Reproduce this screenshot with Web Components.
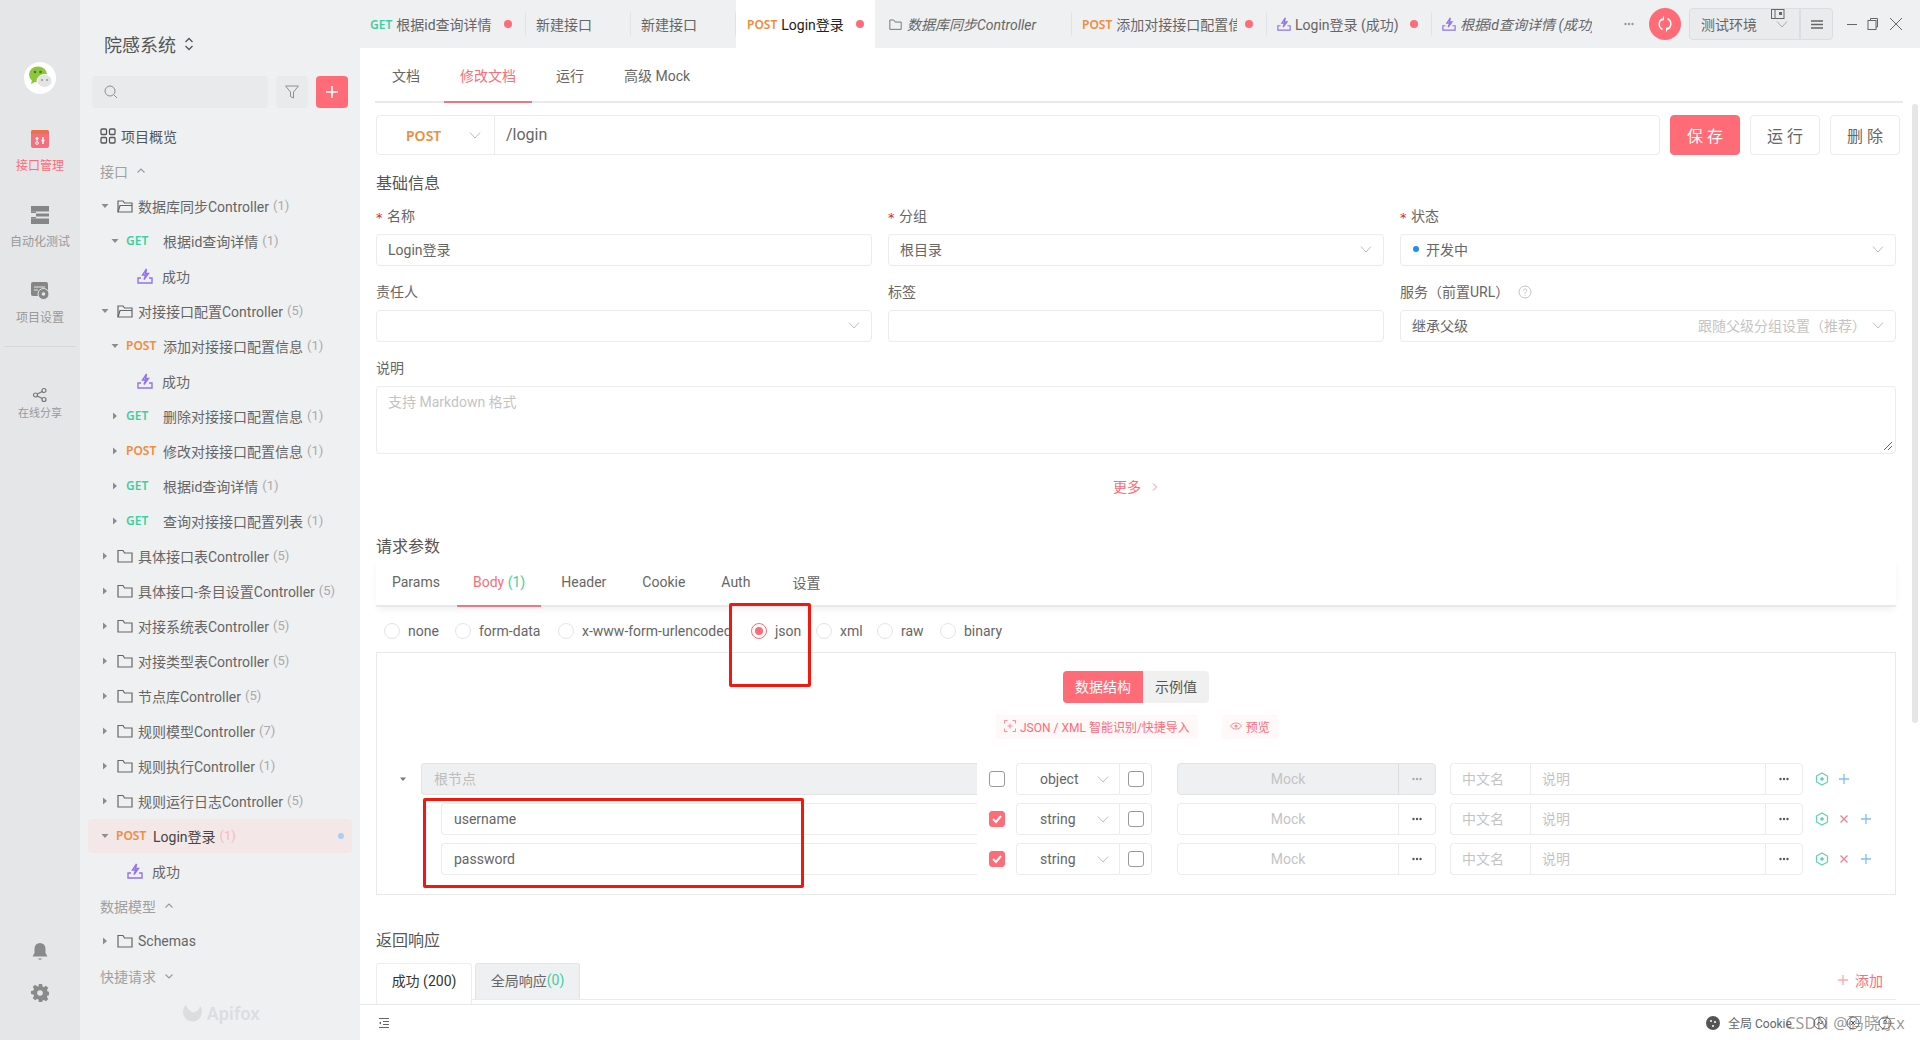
<!DOCTYPE html>
<html lang="zh">
<head>
<meta charset="utf-8">
<title>Apifox</title>
<style>
  html, body { margin: 0; height: 1040px; overflow: hidden; background: #fff; }
  body { font-family: Roboto, "Noto Sans CJK SC", sans-serif; font-size: 14px; color: #666; }
</style>
</head>
<body>
<app-shell>
  <side-rail slot="rail"></side-rail>
  <side-tree slot="tree">
    <tree-row kind="open" arrow="down" pad="12" count="1">数据库同步Controller</tree-row>
    <tree-row kind="get" arrow="down" pad="22" count="1">根据id查询详情</tree-row>
    <tree-row kind="case" pad="49">成功</tree-row>
    <tree-row kind="open" arrow="down" pad="12" count="5">对接接口配置Controller</tree-row>
    <tree-row kind="post" arrow="down" pad="22" count="1">添加对接接口配置信息</tree-row>
    <tree-row kind="case" pad="49">成功</tree-row>
    <tree-row kind="get" arrow="right" pad="22" count="1">删除对接接口配置信息</tree-row>
    <tree-row kind="post" arrow="right" pad="22" count="1">修改对接接口配置信息</tree-row>
    <tree-row kind="get" arrow="right" pad="22" count="1">根据id查询详情</tree-row>
    <tree-row kind="get" arrow="right" pad="22" count="1">查询对接接口配置列表</tree-row>
    <tree-row kind="folder" arrow="right" pad="12" count="5">具体接口表Controller</tree-row>
    <tree-row kind="folder" arrow="right" pad="12" count="5">具体接口-条目设置Controller</tree-row>
    <tree-row kind="folder" arrow="right" pad="12" count="5">对接系统表Controller</tree-row>
    <tree-row kind="folder" arrow="right" pad="12" count="5">对接类型表Controller</tree-row>
    <tree-row kind="folder" arrow="right" pad="12" count="5">节点库Controller</tree-row>
    <tree-row kind="folder" arrow="right" pad="12" count="7">规则模型Controller</tree-row>
    <tree-row kind="folder" arrow="right" pad="12" count="1">规则执行Controller</tree-row>
    <tree-row kind="folder" arrow="right" pad="12" count="5">规则运行日志Controller</tree-row>
    <tree-row kind="post" arrow="down" pad="12" count="1" active>Login登录</tree-row>
    <tree-row kind="case" pad="39">成功</tree-row>
    <tree-head dir="up">数据模型</tree-head>
    <tree-row kind="folder" arrow="right" pad="12">Schemas</tree-row>
    <tree-head dir="down">快捷请求</tree-head>
  </side-tree>
  <main-panel slot="main">
    <tab-strip slot="tabs">
      <tab-item w="166" method="GET" dot>根据id查询详情</tab-item>
      <tab-item w="105">新建接口</tab-item>
      <tab-item w="105">新建接口</tab-item>
      <tab-item w="139" method="POST" dot active>Login登录</tab-item>
      <tab-item w="197" icon="folder" italic>数据库同步Controller</tab-item>
      <tab-item w="195" method="POST" dot>添加对接接口配置信息</tab-item>
      <tab-item w="165" icon="case" dot>Login登录 (成功)</tab-item>
      <tab-item w="168" icon="case" italic>根据id查询详情 (成功)</tab-item>
    </tab-strip>
    <api-form slot="body"></api-form>
    <status-bar slot="foot"></status-bar>
  </main-panel>
</app-shell>

<script>
const PINK = "#ff6b77";
const chevron = (c = "#bdbdbd") => `<svg width="12" height="12" viewBox="0 0 12 12"><path d="M1 3.5 6 9l5-5.5" fill="none" stroke="${c}"/></svg>`;
const dots = (c = "#555") => `<svg width="10" height="4" viewBox="0 0 10 4" fill="${c}"><circle cx="1.500" cy="2" r="1.200"/><circle cx="5" cy="2" r="1.200"/><circle cx="8.500" cy="2" r="1.200"/></svg>`;
const caseIcon = (s = 16) => `<svg width="${s}" height="${s}" viewBox="0 0 16 16" fill="none" stroke="#9373ee" stroke-width="1.4"><path d="M4 10H1v5h14v-5h-3"/><path d="M9.5 1 5.5 7h3.2L7 11.5 11.5 5.5H8.6z" fill="#e6defb"/></svg>`;
const folderIcon = (open, s = 16) => open
  ? `<svg width="${s}" height="${s}" viewBox="0 0 16 16" fill="none" stroke="#666" stroke-width="1.2"><path d="M1 14V3h5l1.5 2H15v9z"/><path d="M1 14l2-6.500h12"/></svg>`
  : `<svg width="${s}" height="${s}" viewBox="0 0 16 16" fill="none" stroke="#666" stroke-width="1.2"><path d="M1 14V2.500h5L7.500 5H15v9z"/></svg>`;

// base: every element gets an open shadow root and fills it when connected
class UiEl extends HTMLElement {
  constructor() {
    super();
    this.attachShadow({ mode: "open" });
  }
  connectedCallback() {
    this.shadowRoot.innerHTML = `<style>${this.css()}</style>${this.html()}`;
  }
  css() { return ""; }
  html() { return "<slot></slot>"; }
}

class AppShell extends UiEl {
  css() { return `
    :host { display: flex; width: 1920px; height: 1040px; position: relative; overflow: hidden; }
    .rail { flex: 0 0 80px; display: flex; }
    .tree { flex: 0 0 280px; display: flex; }
    .main { flex: 1; min-width: 0; display: flex; }
    .mark { position: absolute; right: 15px; bottom: 5px; font-family: "Noto Sans", "Noto Sans CJK SC", sans-serif; font-size: 16px; line-height: 24px; color: rgba(90,90,90,.62); letter-spacing: .2px; }
  `; }
  html() { return `
    <div class="rail"><slot name="rail"></slot></div>
    <div class="tree"><slot name="tree"></slot></div>
    <div class="main"><slot name="main"></slot></div>
    <div class="mark">CSDN @码晓东x</div>`; }
}

class RailItem extends UiEl {
  css() { return `
    :host { display: flex; flex-direction: column; align-items: center; height: 68px; margin-bottom: 8px; padding-top: 4px; box-sizing: border-box; gap: 9px; font-size: 12px; line-height: 16px; color: #999; }
    :host([on]) { color: ${PINK}; }
    :host([small]) { height: auto; padding: 0; gap: 3px; font-size: 11px; margin-top: 40px; margin-bottom: 0; }
    .i { height: 20px; display: flex; }
    :host([small]) .i { height: 16px; }
  `; }
  html() { return `<div class="i"><slot name="icon"></slot></div><slot></slot>`; }
}

class SideRail extends UiEl {
  css() { return `
    :host { display: flex; flex-direction: column; width: 80px; height: 1040px; background: #e5e6e8; box-sizing: border-box; padding-top: 62px; align-items: stretch; }
    .logo { align-self: center; width: 32px; height: 32px; margin-bottom: 31px; }
    .line { height: 1px; background: #d6d7d9; margin: -7px 4px 0; }
    .end { margin-top: auto; padding-bottom: 38px; display: flex; flex-direction: column; align-items: center; gap: 23px; }
    svg { display: block; }
  `; }
  html() { return `
    <svg class="logo" viewBox="0 0 32 32">
      <circle cx="16" cy="16" r="16" fill="#fff"/>
      <ellipse cx="14" cy="12.500" rx="9" ry="8" fill="#8cc63f"/>
      <path d="M8 18l-1 4 5-2.500z" fill="#8cc63f"/>
      <circle cx="11" cy="10" r="1.300" fill="#4a7a1a"/><circle cx="16.500" cy="10" r="1.300" fill="#4a7a1a"/>
      <ellipse cx="20.500" cy="19" rx="7.500" ry="6.500" fill="#e4e4e4" stroke="#fff"/>
      <circle cx="18" cy="18" r="1" fill="#999"/><circle cx="23" cy="18" r="1" fill="#999"/>
    </svg>
    <rail-item on>
      <svg slot="icon" width="18" height="18" viewBox="0 0 18 18" style="margin-top:1px">
        <rect y="0" width="18" height="18" rx="2" fill="#f5707c"/>
        <path d="M0 2a2 2 0 0 1 2-2h14a2 2 0 0 1 2 2v2H0z" fill="#e8724e"/>
        <path d="M6 7v3.500M12 7v7M4.500 8.500h3M10.500 10.500h3" stroke="#fff" stroke-width="1.500"/>
        <circle cx="6" cy="13" r="1.400" fill="none" stroke="#fff"/>
      </svg>接口管理</rail-item>
    <rail-item>
      <svg slot="icon" width="18" height="18" viewBox="0 0 18 18" style="margin-top:1px" fill="#868686">
        <rect width="18" height="5.500"/><rect y="12.500" width="18" height="5.500"/>
        <rect x="0" y="5.500" width="5" height="1.500"/><rect x="0" y="11" width="5" height="1.500"/>
        <rect x="5" y="7.500" width="13" height="3"/>
      </svg>自动化测试</rail-item>
    <rail-item>
      <svg slot="icon" width="18" height="18" viewBox="0 0 18 18" style="margin-top:1px">
        <rect width="17" height="14" rx="2" fill="#868686"/>
        <path d="M3 5h11M3 8h4" stroke="#e5e6e8" stroke-width="1.200"/>
        <circle cx="12.500" cy="12" r="5.500" fill="#868686" stroke="#e5e6e8"/>
        <circle cx="12.500" cy="12" r="1.800" fill="#e5e6e8"/>
      </svg>项目设置</rail-item>
    <div class="line"></div>
    <rail-item small>
      <svg slot="icon" width="16" height="16" viewBox="0 0 16 16" fill="none" stroke="#777" stroke-width="1.200">
        <circle cx="12" cy="3.500" r="2"/><circle cx="12" cy="12.500" r="2"/><circle cx="3.500" cy="8" r="2"/>
        <path d="M5.300 7 10.200 4.500M5.300 9l4.900 2.500"/>
      </svg>在线分享</rail-item>
    <div class="end">
      <svg width="16" height="18" viewBox="0 0 16 18" fill="#8a8a8a"><path d="M8 0a5.500 5.500 0 0 1 5.500 5.500V10l2 3.500H.5l2-3.500V5.500A5.500 5.500 0 0 1 8 0z"/><path d="M5.500 15.500h5L8 17z"/></svg>
      <svg width="18" height="18" viewBox="0 0 18 18"><path fill="#8a8a8a" d="M7.400 0h3.200l.4 2.400 1.500.7 2-1.400 2.300 2.300-1.400 2 .7 1.500 2.400.4v3.200l-2.400.4-.7 1.500 1.400 2-2.300 2.300-2-1.400-1.500.7-.4 2.400H7.400L7 15.600l-1.500-.7-2 1.400-2.300-2.300 1.400-2-.7-1.500L-.5 10V7l2.400-.4.700-1.500-1.400-2 2.300-2.300 2 1.400L7 2.400z" transform="translate(.5 0)"/><circle cx="9" cy="9" r="2.800" fill="#e5e6e8"/></svg>
    </div>`; }
}

class TreeHead extends UiEl {
  css() { return `
    :host { display: flex; align-items: center; height: 35px; padding-left: 12px; gap: 8px; color: #a0a0a0; font-size: 14px; }
    svg { display: block; }
  `; }
  html() {
    const p = this.getAttribute("dir") === "down" ? "M1.500 3.500 5 7l3.500-3.500" : "M1.500 6.500 5 3l3.500 3.500";
    return `<slot></slot><svg width="10" height="10" viewBox="0 0 10 10"><path d="${p}" fill="none" stroke="#999" stroke-width="1.100"/></svg>`;
  }
}

class TreeRow extends UiEl {
  css() {
    const kind = this.getAttribute("kind");
    return `
    :host { display: flex; align-items: center; height: 35px; box-sizing: border-box; padding-left: ${this.getAttribute("pad")}px; font-size: 14px; color: #666; white-space: nowrap; }
    :host([active]) { height: 34px; margin-top: 1px; padding-bottom: 1px; background: #f3e7e8; border-radius: 4px; color: #444; }
    .a { width: 10px; margin: 1px ${kind === "get" || kind === "post" ? 6 : 7}px 0 0; display: flex; justify-content: center; }
    .ic { display: flex; margin: 1px ${kind === "case" ? 9 : 5}px 0 0; }
    .m { font-family: "Noto Sans", sans-serif; font-size: 12px; font-weight: 600; width: 37px; }
    .m.get { color: #3fcf9f; } .m.post { color: #f28b3e; }
    .n { margin-left: 4px; color: #aaa; font-size: 13px; }
    :host([active]) .n { color: #f7b7bc; }
    .dot { margin-left: auto; margin-right: 8px; width: 6px; height: 6px; border-radius: 50%; background: #aecdf3; }
    svg { display: block; }
  `; }
  html() {
    const kind = this.getAttribute("kind"), arrow = this.getAttribute("arrow"), count = this.getAttribute("count");
    const tri = arrow === "down"
      ? `<svg width="10" height="10" viewBox="0 0 10 10"><path d="M1.500 3h7L5 7z" fill="#8c8c8c"/></svg>`
      : `<svg width="10" height="10" viewBox="0 0 10 10"><path d="M3 1.500v7L7 5z" fill="#8c8c8c"/></svg>`;
    let lead = "";
    if (kind === "open") lead = `<span class="ic">${folderIcon(true)}</span>`;
    if (kind === "folder") lead = `<span class="ic">${folderIcon(false)}</span>`;
    if (kind === "case") lead = `<span class="ic">${caseIcon()}</span>`;
    if (kind === "get") lead = `<span class="m get">GET</span>`;
    if (kind === "post") lead = `<span class="m post">POST</span>`;
    return `${arrow ? `<span class="a">${tri}</span>` : ""}${lead}<slot></slot>${count ? `<span class="n">(${count})</span>` : ""}${this.hasAttribute("active") ? `<span class="dot"></span>` : ""}`;
  }
}

class SideTree extends UiEl {
  css() { return `
    :host { display: flex; flex-direction: column; width: 280px; height: 1040px; background: #eff0f2; box-sizing: border-box; position: relative; }
    .title { height: 88px; display: flex; align-items: center; padding: 0 0 0 24px; box-sizing: border-box; margin-bottom: -12px; font-size: 18px; color: #555; gap: 8px; }
    .tools { display: flex; gap: 8px; padding: 0 12px; height: 32px; }
    .search { width: 176px; background: #e9eaec; border-radius: 4px; display: flex; align-items: center; padding-left: 12px; box-sizing: border-box; }
    .btn { width: 32px; background: #e9eaec; border-radius: 4px; display: flex; align-items: center; justify-content: center; }
    .btn.add { background: ${PINK}; }
    .list { padding: 10px 8px 0; display: flex; flex-direction: column; }
    .over { display: flex; align-items: center; height: 35px; padding-left: 12px; gap: 5px; color: #555; }
    .logo { position: absolute; left: 103px; top: 1003px; display: flex; align-items: center; gap: 4px; color: #dcdddf; font-family: "Noto Sans", sans-serif; font-size: 17px; font-weight: 600; line-height: 22px; }
    svg { display: block; }
  `; }
  html() { return `
    <div class="title">院感系统
      <svg width="10" height="16" viewBox="0 0 10 16" fill="none" stroke="#555" stroke-width="1.300"><path d="M1.500 6 5 2.500 8.500 6M1.500 10 5 13.500 8.500 10"/></svg></div>
    <div class="tools">
      <div class="search"><svg width="14" height="14" viewBox="0 0 14 14" fill="none" stroke="#8f8f8f"><circle cx="6" cy="6" r="5"/><path d="M10 10l3 3"/></svg></div>
      <div class="btn"><svg width="14" height="14" viewBox="0 0 14 14" fill="none" stroke="#8f8f8f"><path d="M.5 1h13L8.500 7v6l-3-1.500V7z"/></svg></div>
      <div class="btn add"><svg width="14" height="14" viewBox="0 0 14 14" stroke="#fff" stroke-width="1.600"><path d="M7 1v12M1 7h12"/></svg></div>
    </div>
    <div class="list">
      <div class="over"><svg width="16" height="16" viewBox="0 0 16 16" fill="none" stroke="#555" stroke-width="1.300"><rect x="1" y="1" width="5.500" height="5.500" rx="1"/><rect x="9.500" y="1" width="5.500" height="5.500" rx="1"/><rect x="1" y="9.500" width="5.500" height="5.500" rx="1"/><rect x="9.500" y="9.500" width="5.500" height="5.500" rx="1"/></svg>项目概览</div>
      <tree-head dir="up">接口</tree-head>
      <slot></slot>
    </div>
    <div class="logo"><svg width="20" height="18" viewBox="0 0 20 18" fill="#dcdddf"><path d="M3 0c-2 2-3 4-3 7a9.500 9.500 0 0 0 19 0c0-2.500-.5-4.500-2-6.500-.5 4-3 6-7 7C7 6 4.500 4 3 0z"/></svg>Apifox</div>`; }
}

class TabItem extends UiEl {
  css() {
    const w = this.getAttribute("w");
    return `
    :host { position: relative; flex: 0 0 ${w}px; width: ${w}px; height: 48px; box-sizing: border-box; display: flex; align-items: center; padding: 0 14px 0 10px; font-size: 14px; color: #666; white-space: nowrap; overflow: hidden; gap: 4px; }
    :host([active]) { background: #fff; color: #222; padding: 0 11px; }
    :host([italic]) { padding-right: 8px; }
    :host([icon="folder"]) { padding-left: 14px; gap: 5px; }
    :host([italic]) .t { font-style: italic; }
    :host::after { content: ""; position: absolute; right: 0; top: 12px; height: 24px; width: 1px; background: #e2e3e5; }
    :host([active])::after, :host(:last-child)::after { display: none; }
    .t { overflow: hidden; flex: 1; min-width: 0; }
    .m { font-family: "Noto Sans", sans-serif; font-weight: 600; font-size: 12px; }
    .GET { color: #3fcf9f; } .POST { color: #f28b3e; }
    .dot { width: 8px; height: 8px; border-radius: 50%; background: ${PINK}; flex: none; margin-left: 4px; }
    svg { display: block; flex: none; }
  `; }
  html() {
    const m = this.getAttribute("method"), ic = this.getAttribute("icon");
    return `${m ? `<span class="m ${m}">${m}</span>` : ""}${ic === "folder" ? folderIcon(false, 13).replace('#666', '#777') : ""}${ic === "case" ? caseIcon(14) : ""}<span class="t"><slot></slot></span>${this.hasAttribute("dot") ? `<span class="dot"></span>` : ""}`;
  }
}

class TabStrip extends UiEl {
  css() { return `
    :host { display: flex; height: 48px; background: #eff0f2; align-items: stretch; }
    .tabs { display: flex; flex: 0 0 1240px; overflow: hidden; }
    .more { width: 49px; box-sizing: border-box; padding-left: 9px; display: flex; align-items: center; justify-content: center; }
    .sync { width: 32px; height: 32px; border-radius: 50%; background: ${PINK}; margin: 8px 8px 8px 0; display: flex; align-items: center; justify-content: center; }
    .env { position: relative; width: 144px; height: 32px; margin-top: 8px; box-sizing: border-box; border: 1px solid #dcdde0; border-radius: 4px; background: #eaebed; display: flex; align-items: center; font-size: 14px; color: #666; }
    .env .n { width: 111px; padding-left: 11px; box-sizing: border-box; display: flex; align-items: center; justify-content: space-between; padding-right: 11px; height: 100%; border-right: 2px solid #dcdde0; }
    .env .b { flex: 1; display: flex; justify-content: center; }
    .pop { position: absolute; left: 81px; top: -1px; }
    .win { display: flex; align-items: center; gap: 9px; margin-left: 13px; }
    svg { display: block; }
  `; }
  html() { return `
    <div class="tabs"><slot></slot></div>
    <div class="more">${dots("#999")}</div>
    <div class="sync"><svg width="16" height="16" viewBox="0 0 16 16" fill="none" stroke="#fff" stroke-width="1.500"><path d="M5.500 13.500A6 6 0 0 1 6 2.600M10.500 2.500a6 6 0 0 1-.5 10.900"/><path d="M6.500 .5v3.500H3M9.500 15.500V12H13" stroke-width="1"/></svg></div>
    <div class="env">
      <div class="n">测试环境${chevron("#aaa")}</div>
      <div class="b"><svg width="14" height="12" viewBox="0 0 14 12" fill="none" stroke="#666" stroke-width="1.500"><path d="M1 3h12M1 6.500h12M1 10h12"/></svg></div>
      <svg class="pop" width="14" height="12" viewBox="0 0 14 12" fill="#eaebed" stroke="#666"><rect x=".5" y="1.500" width="12.500" height="9"/><path d="M4 1.500v9"/><rect x="8" y="4" width="3" height="3" fill="#666" stroke="none"/></svg>
    </div>
    <div class="win">
      <svg width="12" height="12" viewBox="0 0 12 12" stroke="#666"><path d="M1 6.500h10"/></svg>
      <svg width="12" height="14" viewBox="0 0 12 14" fill="none" stroke="#666"><rect x="1" y="3.500" width="8" height="9"/><path d="M3.500 3.500V1.500h7v8.500H9"/></svg>
      <svg width="16" height="16" viewBox="0 0 16 16" stroke="#666"><path d="M2 2l12 12M14 2 2 14"/></svg>
    </div>`; }
}

class MainPanel extends UiEl {
  css() { return `
    :host { display: flex; flex-direction: column; width: 1560px; height: 1040px; background: #fff; }
    .body { flex: 1; min-height: 0; display: flex; overflow: hidden; }
    .bar { flex: 0 0 8px; display: flex; flex-direction: column; padding-top: 56px; box-sizing: border-box; }
    .bar i { display: block; width: 6px; height: 619px; background: #e6e6e6; border-radius: 3px; }
  `; }
  html() { return `
    <slot name="tabs"></slot>
    <div class="body"><slot name="body"></slot><div class="bar"><i></i></div></div>
    <slot name="foot"></slot>`; }
}

class UnderTabs extends UiEl {
  css() { return `
    :host { display: flex; border-bottom: 2px solid #e8e9ea; height: 53px; box-sizing: content-box; gap: 8px; font-size: 14px; color: #666; }
    :host([shadow]) { height: 47px; gap: 4px; box-shadow: 0 4px 8px -2px rgba(0,0,0,.07); }
    ::slotted(u-tab) { margin-bottom: -2px; }
  `; }
}

class UTab extends UiEl {
  css() { return `
    :host { display: flex; align-items: center; padding: 0 16px; border-bottom: 2px solid transparent; white-space: nowrap; }
    :host([on]) { color: ${PINK}; border-bottom-color: #f5747f; }
    span { white-space: pre; }
  `; }
  html() { return `<span><slot></slot></span>`; }
}

class FormField extends UiEl {
  css() { return `
    :host { display: flex; flex-direction: column; gap: 8px; font-size: 14px; min-width: 0; }
    .l { height: 20px; line-height: 20px; color: #666; display: flex; align-items: center; }
    .r { color: #d4264a; font-family: "DejaVu Sans", sans-serif; font-size: 13px; width: 7px; margin-right: 4px; padding-top: 3px; }
    .b { height: 32px; box-sizing: border-box; border: 1px solid #ebebeb; border-radius: 4px; display: flex; align-items: center; padding: 0 11px 2px; color: #666; gap: 6px; }
    .g { flex: 1; }
    .h { color: #c4c4c4; }
    svg { display: block; flex: none; }
  `; }
  html() {
    const a = (n) => this.getAttribute(n);
    return `<div class="l">${this.hasAttribute("req") ? `<span class="r">*</span>` : ""}${a("label")}${this.hasAttribute("help") ? `<svg style="margin-left:9px" width="14" height="14" viewBox="0 0 14 14" fill="none" stroke="#c4c4c4"><circle cx="7" cy="7" r="6"/><path d="M5.300 5.500C5.500 3.500 8.800 3.500 8.800 5.500 8.800 7 7 7 7 8.600M7 9.800v1"/></svg>` : ""}</div>
      <div class="b"><slot></slot><span class="g"></span>${a("hint") ? `<span class="h">${a("hint")}</span>` : ""}${this.hasAttribute("sel") ? chevron() : ""}</div>`;
  }
}

class RadioItem extends UiEl {
  css() { return `
    :host { display: flex; align-items: center; gap: 8px; font-size: 14px; color: #666; white-space: nowrap; }
    i { width: 16px; height: 16px; box-sizing: border-box; border: 1px solid #e5e5e5; border-radius: 50%; display: flex; align-items: center; justify-content: center; flex: none; }
    :host([on]) i { border-color: ${PINK}; }
    :host([on]) i::after { content: ""; width: 8px; height: 8px; border-radius: 50%; background: ${PINK}; }
  `; }
  html() { return `<i></i><slot></slot>`; }
}

class CheckBox extends UiEl {
  css() { return `
    :host { display: block; width: 16px; height: 16px; box-sizing: border-box; border: 1px solid #999; border-radius: 3px; flex: none; }
    :host([on]) { background: ${PINK}; border-color: ${PINK}; }
    svg { display: block; }
  `; }
  html() { return this.hasAttribute("on") ? `<svg width="14" height="14" viewBox="0 0 14 14" fill="none" stroke="#fff" stroke-width="2"><path d="M3 7l3 3 5-6"/></svg>` : ""; }
}

class SchemaRow extends UiEl {
  css() { return `
    :host { display: flex; height: 32px; align-items: center; font-size: 14px; color: #666; padding-right: 0; }
    .lead { width: 44px; flex: none; display: flex; justify-content: center; padding-left: 8px; box-sizing: border-box; }
    .cell { height: 32px; box-sizing: border-box; border: 1px solid #ebebeb; display: flex; align-items: center; flex: none; }
    .name { flex: 1; min-width: 0; border-right: 0; border-radius: 4px 0 0 4px; padding-left: 12px; }
    :host([root]) .name { background: #eff0f2; border-color: #e2e3e5; color: #bdbdbd; padding-bottom: 2px; }
    :host(:not([root])) .name { margin-left: 20px; }
    .c1 { margin: 0 11px 0 12px; }
    .type { width: 103px; border-radius: 4px 0 0 4px; padding-left: 23px; padding-right: 10px; justify-content: space-between; border-right: 0; }
    .req { width: 33px; border-radius: 0 4px 4px 0; justify-content: center; margin-right: 25px; }
    .mock { width: 259px; border-radius: 4px; color: #c4c4c4; }
    :host([root]) .mock { background: #eff0f2; border-color: #e2e3e5; }
    .mock b { flex: 1; text-align: center; font-weight: 400; }
    .more { width: 36px; height: 100%; border-left: 1px solid #ebebeb; display: flex; align-items: center; justify-content: center; }
    :host([root]) .mock .more { border-color: #ddd; }
    .cn { width: 80px; margin-left: 14px; border-radius: 4px 0 0 4px; padding: 0 0 2px 11px; color: #c4c4c4; border-right: 0; }
    .ds { width: 235px; padding: 0 0 2px 11px; color: #c4c4c4; border-right: 0; }
    .dm { width: 38px; border-radius: 0 4px 4px 0; justify-content: center; }
    .act { width: 92px; flex: none; padding-left: 12px; box-sizing: border-box; display: flex; align-items: center; gap: 8px; }
    svg { display: block; }
  `; }
  html() {
    const root = this.hasAttribute("root");
    const eye = `<svg width="14" height="14" viewBox="0 0 14 14" fill="none" stroke="#5bd5ab" stroke-width="1.200"><path d="M7 1l5.500 3v6L7 13 1.500 10V4z"/><circle cx="7" cy="7" r="1.800" fill="#5bd5ab" stroke="none"/></svg>`;
    const del = `<svg width="14" height="14" viewBox="0 0 14 14" stroke="#f4808c" stroke-width="1.300"><path d="M3.500 3.500l7 7M10.500 3.500l-7 7"/></svg>`;
    const add = `<svg width="14" height="14" viewBox="0 0 14 14" stroke="#82bff5" stroke-width="1.300"><path d="M7 2v10M2 7h10"/></svg>`;
    return `
      <div class="lead">${root ? `<svg width="8" height="8" viewBox="0 0 8 8"><path d="M1 2.500h6L4 6z" fill="#777"/></svg>` : ""}</div>
      <div class="cell name"><slot></slot></div>
      <check-box class="c1" ${root ? "" : "on"}></check-box>
      <div class="cell type">${this.getAttribute("type")}${chevron()}</div>
      <div class="cell req"><check-box></check-box></div>
      <div class="cell mock"><b>Mock</b><span class="more">${dots(root ? "#aaa" : "#555")}</span></div>
      <div class="cell cn">中文名</div>
      <div class="cell ds">说明</div>
      <div class="cell dm">${dots()}</div>
      <div class="act">${eye}${root ? "" : del}${add}</div>`;
  }
}

class ApiForm extends UiEl {
  css() { return `
    :host { display: block; flex: 1; min-width: 0; padding: 0 16px; box-sizing: border-box; color: #666; position: relative; }
    under-tabs.nav { margin: 0 -7px 0 -1px; }
    under-tabs.nav u-tab:first-child { margin-left: 1px; }
    .url { display: flex; gap: 10px; margin: 12px -4px 0 0; height: 40px; }
    .addr { flex: 1; display: flex; border: 1px solid #ebebeb; border-radius: 4px; font-size: 16px; color: #666; box-sizing: border-box; }
    .addr .me { width: 118px; box-sizing: border-box; border-right: 1px solid #ebebeb; display: flex; align-items: center; justify-content: space-between; padding: 0 13px 0 29px; color: #f28b3e; font-family: "Noto Sans", sans-serif; font-weight: 600; font-size: 14px; }
    .addr .p { padding-left: 11px; line-height: 38px; }
    .act { width: 70px; box-sizing: border-box; border: 1px solid #ebebeb; border-radius: 4px; display: flex; align-items: center; justify-content: center; font-size: 16px; color: #666; white-space: pre; }
    .act.main { background: ${PINK}; border-color: ${PINK}; color: #fff; }
    h3 { margin: 0; font-weight: 400; font-size: 16px; line-height: 24px; color: #555; }
    .t1 { margin: 17px 0 -1px; }
    .grid { margin-top: 11px; display: grid; grid-template-columns: 1fr 1fr 1fr; column-gap: 16px; row-gap: 16px; }
    .desc { margin-top: 16px; display: flex; flex-direction: column; gap: 8px; font-size: 14px; }
    .desc .l { height: 20px; line-height: 20px; }
    .ta { position: relative; height: 68px; box-sizing: border-box; border: 1px solid #ebebeb; border-radius: 4px; padding: 4px 11px; color: #c4c4c4; }
    .ta svg { position: absolute; right: 2px; bottom: 2px; display: block; }
    .morebox { margin-top: 23px; height: 20px; line-height: 20px; display: flex; justify-content: center; align-items: center; gap: 10px; color: ${PINK}; font-size: 14px; }
    .t2 { margin: 38px 0 -1px; }
    .sub u-tab:nth-child(2) { margin-left: -3px; }
    .sub u-tab:last-child { margin-left: 6px; }
    .radios { margin-top: 14px; height: 20px; display: flex; padding-left: 8px; }
    .schema { margin-top: 11px; border: 1px solid #e8e9ea; box-sizing: border-box; padding: 18px 0 19px; }
    .seg { display: flex; justify-content: center; font-size: 14px; height: 32px; }
    .seg div { display: flex; align-items: center; justify-content: center; border-radius: 0 4px 4px 0; background: #f0f0f0; width: 66px; color: #555; padding-bottom: 2px; box-sizing: border-box; }
    .seg .on { background: ${PINK}; color: #fff; width: 80px; border-radius: 4px 0 0 4px; }
    .imp { display: flex; gap: 24px; margin-top: 12px; height: 24px; padding-left: 619px; font-size: 12px; color: ${PINK}; }
    .imp div { display: flex; align-items: center; gap: 4px; background: #fff8f8; border-radius: 3px; padding: 0 8px 2px; white-space: nowrap; }
    .rows { margin-top: 24px; display: flex; flex-direction: column; gap: 8px; }
    .t3 { margin-top: 34px; }
    .resp { margin-top: 10px; display: flex; height: 36px; border-bottom: 1px solid #ebebeb; font-size: 14px; position: relative; }
    .resp .a { width: 96px; height: 41px; box-sizing: border-box; background: #fff; border: 1px solid #eee; border-bottom: 0; border-radius: 3px 3px 0 0; display: flex; align-items: center; justify-content: center; color: #333; padding-bottom: 8px; }
    .resp .b { margin-left: 3px; width: 105px; height: 36px; box-sizing: border-box; background: #eff0f2; border: 1px solid #e2e3e5; border-bottom: 0; border-radius: 3px 3px 0 0; display: flex; align-items: center; justify-content: center; color: #666; padding-bottom: 3px; }
    .resp .b em { font-style: normal; color: #3fcf9f; }
    .resp .add { margin-left: auto; margin-right: 13px; display: flex; align-items: center; gap: 6px; color: ${PINK}; padding-bottom: 2px; }
    .note { position: absolute; border: 3px solid #f5170e; border-radius: 2px; box-sizing: border-box; pointer-events: none; }
    svg { display: block; }
  `; }
  html() { return `
    <under-tabs class="nav">
      <u-tab>文档</u-tab><u-tab on>修改文档</u-tab><u-tab>运行</u-tab><u-tab>高级 Mock</u-tab>
    </under-tabs>
    <div class="url">
      <div class="addr"><div class="me">POST${chevron()}</div><div class="p">/login</div></div>
      <div class="act main">保 存</div><div class="act">运 行</div><div class="act">删 除</div>
    </div>
    <h3 class="t1">基础信息</h3>
    <div class="grid">
      <form-field req label="名称">Login登录</form-field>
      <form-field req label="分组" sel>根目录</form-field>
      <form-field req label="状态" sel><svg width="6" height="6" viewBox="0 0 6 6" style="margin:0 1px 0 1px"><circle cx="3" cy="3" r="3" fill="#1e8ef5"/></svg>开发中</form-field>
      <form-field label="责任人" sel></form-field>
      <form-field label="标签"></form-field>
      <form-field label="服务（前置URL）" help sel hint="跟随父级分组设置（推荐）">继承父级</form-field>
    </div>
    <div class="desc"><div class="l">说明</div>
      <div class="ta">支持 Markdown 格式<svg width="10" height="10" viewBox="0 0 10 10" stroke="#666"><path d="M1 9l8-8M5 9l4-4"/></svg></div></div>
    <div class="morebox">更多<svg width="8" height="10" viewBox="0 0 8 10" fill="none" stroke="#ff8a94"><path d="M2 1.500 5.500 5 2 8.500"/></svg></div>
    <h3 class="t2">请求参数</h3>
    <under-tabs class="sub" shadow>
      <u-tab>Params</u-tab><u-tab on>Body <em style="font-style:normal;color:#3fcf9f">(1)</em></u-tab><u-tab>Header</u-tab><u-tab>Cookie</u-tab><u-tab>Auth</u-tab><u-tab>设置</u-tab>
    </under-tabs>
    <div class="radios">
      <radio-item style="width:71px">none</radio-item>
      <radio-item style="width:103px">form-data</radio-item>
      <radio-item style="width:193px">x-www-form-urlencoded</radio-item>
      <radio-item style="width:65px" on>json</radio-item>
      <radio-item style="width:61px">xml</radio-item>
      <radio-item style="width:63px">raw</radio-item>
      <radio-item>binary</radio-item>
    </div>
    <div class="schema">
      <div class="seg"><div class="on">数据结构</div><div>示例值</div></div>
      <div class="imp">
        <div><svg width="12" height="12" viewBox="0 0 12 12" fill="none" stroke="#ff8a94"><path d="M.5 3.500v-3h3M8.500.5h3v3M11.500 8.500v3h-3M3.500 11.500h-3v-3M3.500 6h5M6 3.500v5"/></svg>JSON / XML 智能识别/快捷导入</div>
        <div><svg width="12" height="12" viewBox="0 0 12 12" fill="none" stroke="#ff8a94"><path d="M.5 6C3 2 9 2 11.500 6 9 10 3 10 .5 6z"/><circle cx="6" cy="6" r="1.500" fill="#ff8a94" stroke="none"/></svg>预览</div>
      </div>
      <div class="rows">
        <schema-row root type="object">根节点</schema-row>
        <schema-row type="string">username</schema-row>
        <schema-row type="string">password</schema-row>
      </div>
    </div>
    <h3 class="t3">返回响应</h3>
    <div class="resp">
      <div class="a">成功 (200)</div>
      <div class="b">全局响应<em>(0)</em></div>
      <div class="add"><svg width="12" height="12" viewBox="0 0 12 12" stroke="#ffa8af" stroke-width="1.300"><path d="M6 1v10M1 6h10"/></svg>添加</div>
    </div>
    <div class="note" style="left:369px;top:555px;width:82px;height:84px"></div>
    <div class="note" style="left:63px;top:750px;width:381px;height:90px"></div>`; }
}

class StatusBar extends UiEl {
  css() { return `
    :host { display: flex; align-items: center; height: 36px; box-sizing: border-box; border-top: 1px solid #e8e9ea; background: #fff; padding: 0 28px 0 18px; font-size: 12px; color: #666; position: relative; }
    .r { margin-left: auto; display: flex; align-items: center; }
    .ck { display: flex; align-items: center; gap: 8px; width: 107px; white-space: nowrap; }
    .ic { width: 79px; display: flex; justify-content: space-between; }
    svg { display: block; }
  `; }
  html() { return `
    <svg width="12" height="12" viewBox="0 0 12 12" stroke="#666"><path d="M1 1.500h10M5 4.500h6M5 7.500h6M1 10.500h10"/><path d="M3 4.500 1 6l2 1.500z" fill="#666" stroke="none"/></svg>
    <div class="r">
      <div class="ck"><svg width="14" height="14" viewBox="0 0 14 14"><circle cx="7" cy="7" r="7" fill="#555"/><circle cx="5" cy="5" r="1" fill="#fff"/><circle cx="9" cy="6" r="1" fill="#fff"/><circle cx="7" cy="10" r="1" fill="#fff"/></svg>全局 Cookie</div>
      <div class="ic">
        <svg width="14" height="14" viewBox="0 0 14 14" fill="none" stroke="#666"><circle cx="7" cy="7" r="6"/><path d="M4 9l2-3 2 2 2-3"/></svg>
        <svg width="14" height="14" viewBox="0 0 14 14" fill="none" stroke="#666"><circle cx="7" cy="7" r="6"/><path d="M5 5l4 4M9 5 5 9"/></svg>
        <svg width="14" height="14" viewBox="0 0 14 14" fill="none" stroke="#666"><circle cx="7" cy="7" r="6"/><path d="M5.500 5.500C5.500 4 8.500 4 8.500 5.500 8.500 7 7 7 7 8.500"/></svg>
      </div>
    </div>`; }
}

customElements.define("app-shell", AppShell);
customElements.define("rail-item", RailItem);
customElements.define("side-rail", SideRail);
customElements.define("tree-head", TreeHead);
customElements.define("tree-row", TreeRow);
customElements.define("side-tree", SideTree);
customElements.define("tab-item", TabItem);
customElements.define("tab-strip", TabStrip);
customElements.define("main-panel", MainPanel);
customElements.define("under-tabs", UnderTabs);
customElements.define("u-tab", UTab);
customElements.define("form-field", FormField);
customElements.define("radio-item", RadioItem);
customElements.define("check-box", CheckBox);
customElements.define("schema-row", SchemaRow);
customElements.define("api-form", ApiForm);
customElements.define("status-bar", StatusBar);
</script>
</body>
</html>
